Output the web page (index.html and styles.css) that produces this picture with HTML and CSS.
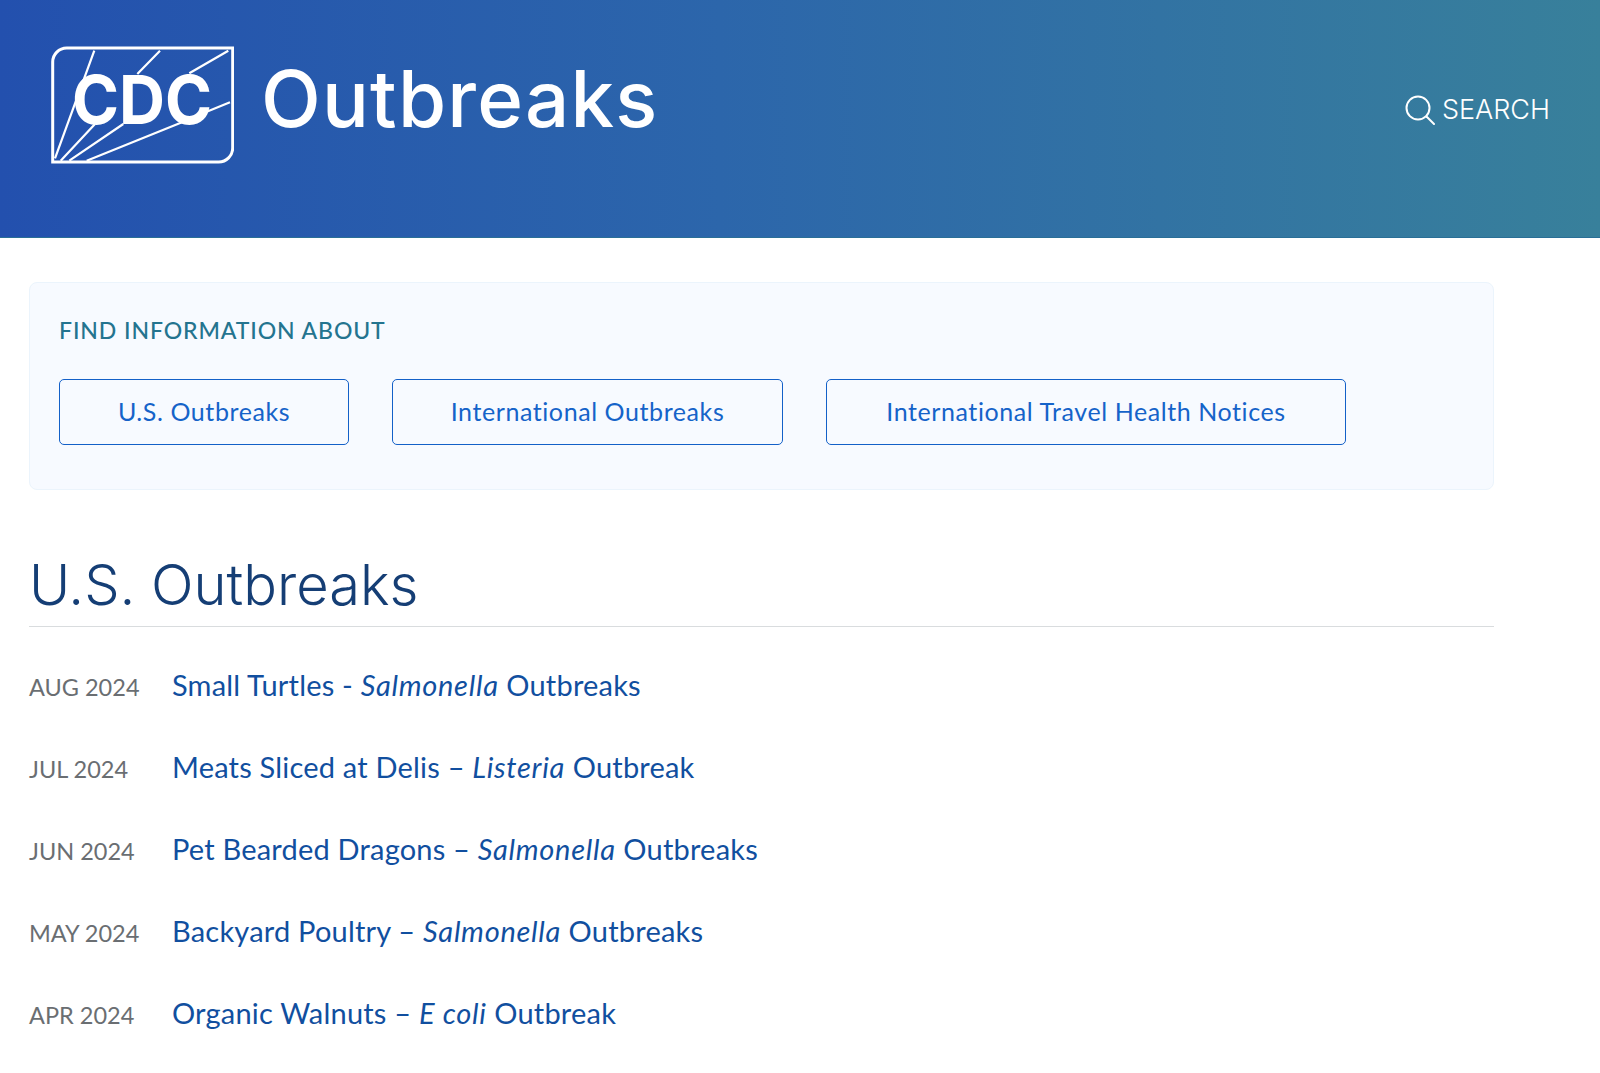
FILE: index.html

```html
<!DOCTYPE html>
<html lang="en">
<head>
  <meta charset="UTF-8" />
  <title>CDC Outbreaks</title>
  <link rel="stylesheet" href="styles.css">
</head>
<body>
  <header class="site-header">
    <div class="brand">
      <svg class="logo" viewBox="0 0 184 120" width="184" height="120" fill="none" stroke="#fff">
        <path stroke-width="3" d="M2.7 116V16a14 14 0 0 1 14-14h166v100a14 14 0 0 1-14 14z" />
        <path stroke-width="2.2" d="M5 112.3L44.3 4.7M10.7 114.7L45 78M87.3 28L110 4.7M19.3 114.7L73.3 78M139.3 27.3L178.3 4.7M36.7 114.7L133.3 75.7M156.7 65.7L180 56.3" />
        <text class="logo-text" x="22" y="78" textLength="140" lengthAdjust="spacingAndGlyphs">CDC</text>
      </svg>
      <span class="brand-name">Outbreaks</span>
    </div>
    <a class="search" href="#">
      <svg viewBox="0 0 30 30" width="30" height="30" fill="none" stroke="#fff" stroke-width="2" stroke-linecap="round">
        <circle cx="13" cy="13" r="11.5" />
        <path d="M21.5 21.5L29 29" />
      </svg>
      SEARCH
    </a>
  </header>

  <main class="content">
    <section class="finder">
      <h2 class="finder-title">FIND INFORMATION ABOUT</h2>
      <div class="finder-links">
        <a class="btn btn-us" href="#">U.S. Outbreaks</a>
        <a class="btn btn-intl" href="#">International Outbreaks</a>
        <a class="btn btn-travel" href="#">International Travel Health Notices</a>
      </div>
    </section>

    <h1 class="section-title">U.S. Outbreaks</h1>

    <ul class="outbreaks">
      <li><span class="date">AUG 2024</span><a href="#">Small Turtles - <em>Salmonella</em> Outbreaks</a></li>
      <li><span class="date">JUL 2024</span><a href="#">Meats Sliced at Delis – <em>Listeria</em> Outbreak</a></li>
      <li><span class="date">JUN 2024</span><a href="#">Pet Bearded Dragons – <em>Salmonella</em> Outbreaks</a></li>
      <li><span class="date">MAY 2024</span><a href="#">Backyard Poultry – <em>Salmonella</em> Outbreaks</a></li>
      <li><span class="date">APR 2024</span><a href="#">Organic Walnuts – <em>E coli</em> Outbreak</a></li>
    </ul>
  </main>
</body>
</html>
```

FILE: styles.css

```css
body {
  margin: 0;
  background: #fff;
  font-family: "Lato", "Noto Sans", sans-serif;
}
a {
  text-decoration: none;
}
.site-header {
  height: 237px;
  border-bottom: 1px solid #2a6f96;
  background: linear-gradient(90deg, #2350ae 0%, #2c66ab 45%, #38809b 100%);
  display: flex;
  justify-content: space-between;
  align-items: flex-start;
  padding: 0 50px;
}
.brand {
  display: flex;
  align-items: center;
  margin-top: 46px;
  gap: 27px;
}
.logo-text {
  font-family: "Inter", sans-serif;
  font-weight: 700;
  font-size: 68px;
  fill: #fff;
  stroke: none;
}
.brand-name {
  font-family: "Inter", sans-serif;
  font-size: 78px;
  font-weight: 500;
  letter-spacing: 1.2px;
  color: #fff;
  line-height: 104px;
  margin-top: -14px;
}
.search {
  display: flex;
  align-items: center;
  gap: 7px;
  margin-top: 95px;
  font-family: "Inter", sans-serif;
  font-size: 27px;
  font-weight: 300;
  color: #fff;
  line-height: 30px;
}
.content {
  width: 1465px;
  margin-left: 29px;
}
.finder {
  margin-top: 44px;
  height: 206px;
  border: 1px solid #ebf4fc;
  border-radius: 8px;
  background: #f7faff;
  padding: 0 29px;
}
.finder-title {
  margin: 33px 0 0;
  font-size: 23px;
  line-height: 28px;
  font-weight: 500;
  letter-spacing: 0.9px;
  color: #24748f;
}
.finder-links {
  display: flex;
  gap: 43px;
  margin-top: 35px;
}
.btn {
  display: flex;
  justify-content: center;
  align-items: center;
  box-sizing: border-box;
  height: 66px;
  padding-bottom: 3px;
  border: 1px solid #1360c8;
  border-radius: 5px;
  font-size: 25px;
  letter-spacing: 0.58px;
  color: #1563c9;
}
.btn-us {
  width: 290px;
}
.btn-intl {
  width: 391px;
}
.btn-travel {
  width: 520px;
}
.section-title {
  margin: 61px 0 0;
  height: 75px;
  border-bottom: 1px solid #d9dcde;
  font-family: "Inter", sans-serif;
  font-size: 56px;
  font-weight: 300;
  line-height: 68px;
  color: #153e75;
}
.outbreaks {
  list-style: none;
  margin: 16px 0 0;
  padding: 0;
}
.outbreaks li {
  display: flex;
  align-items: center;
  height: 82px;
}
.date {
  width: 143px;
  padding-top: 5px;
  font-size: 23.5px;
  color: #6a6e72;
}
.outbreaks a {
  font-size: 29px;
  letter-spacing: 0.2px;
  color: #114f9f;
}
.outbreaks em {
  letter-spacing: 0.7px;
}
```
